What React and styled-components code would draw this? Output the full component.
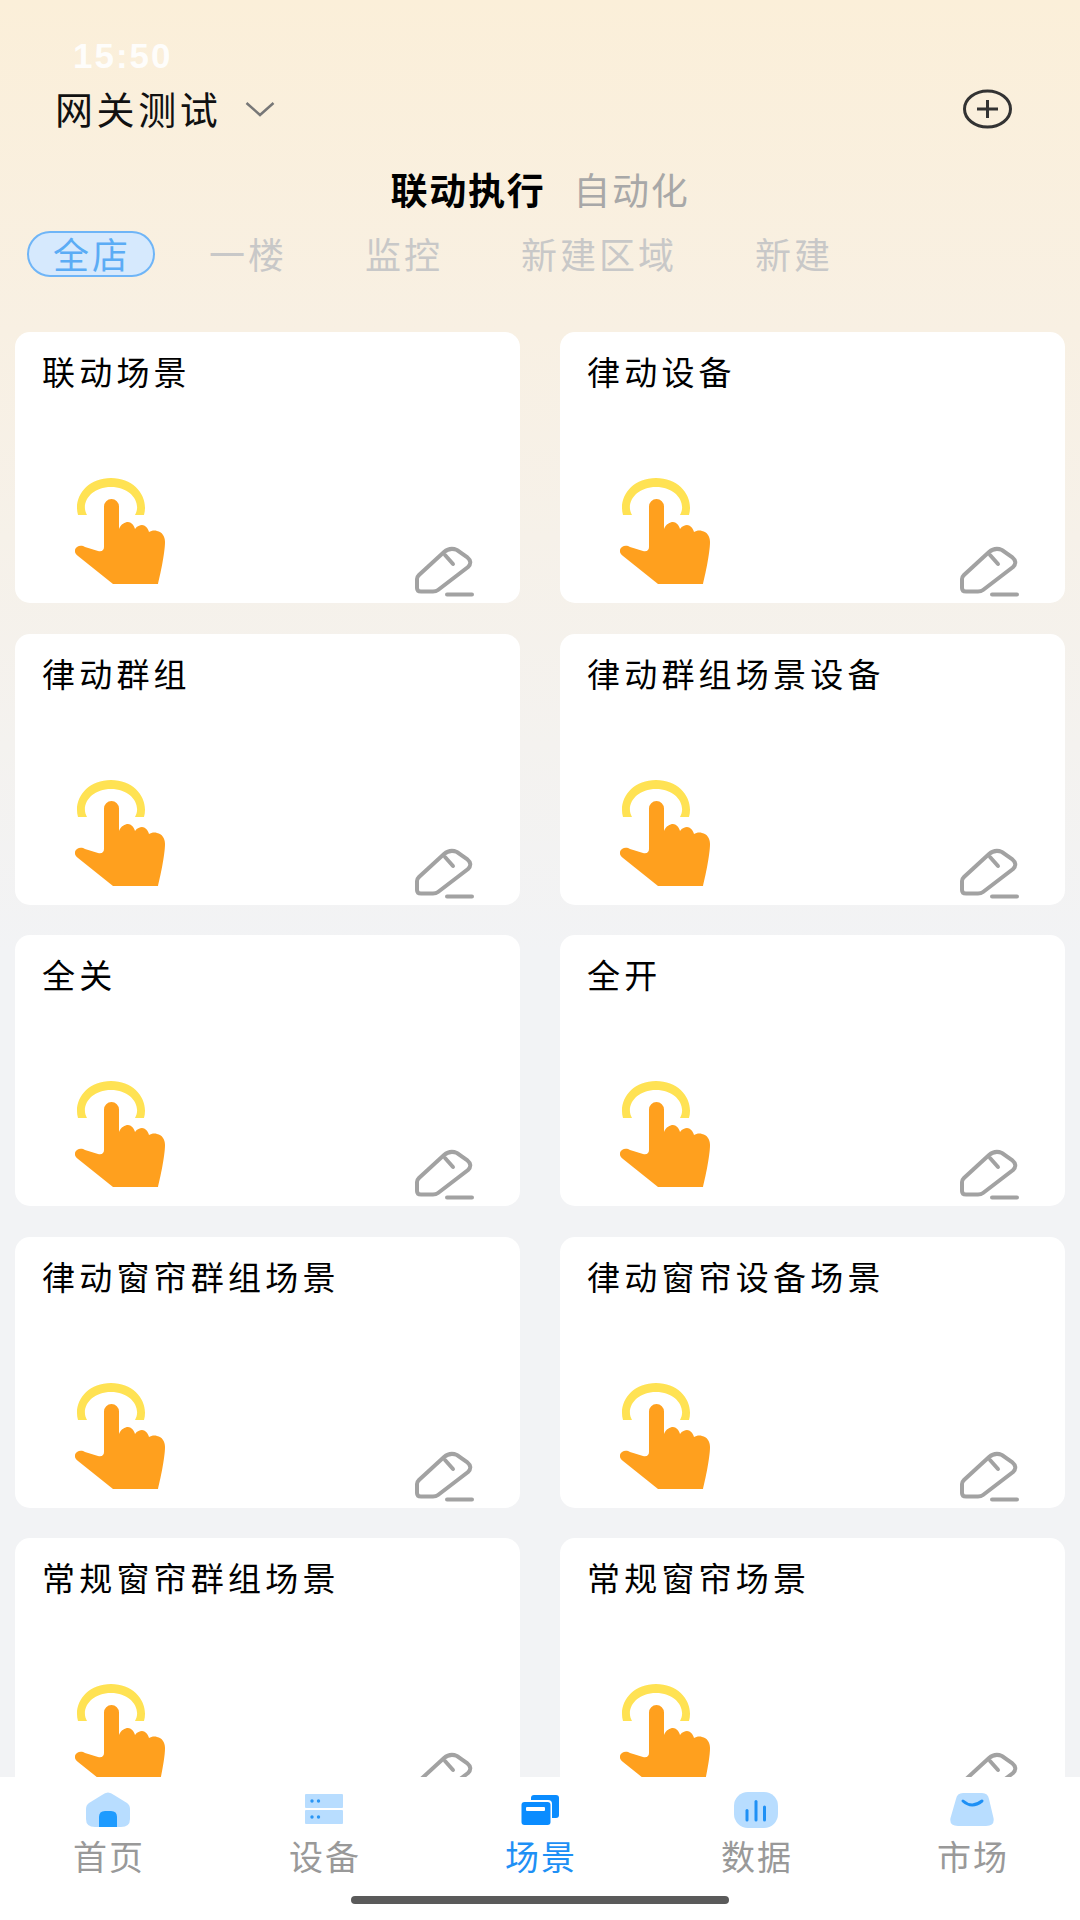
import styled, { createGlobalStyle } from "styled-components";

const GlobalStyle = createGlobalStyle`
  html, body {
    margin: 0;
    padding: 0;
  }
  * {
    box-sizing: border-box;
  }
`;

const FONT = `"Noto Sans CJK SC", "Noto Sans", sans-serif`;

const Page = styled.div`
  width: 1080px;
  height: 1920px;
  display: flex;
  flex-direction: column;
  overflow: hidden;
  font-family: ${FONT};
  background: linear-gradient(#fbefd9 0, #f8f0e3 330px, #f2f3f5 950px);
`;

// header start.
const StatusTime = styled.div`
  height: 36px;
  margin-top: 38px;
  padding-left: 73px;
  font-family: "Liberation Sans", sans-serif;
  font-size: 35px;
  font-weight: 700;
  line-height: 36px;
  letter-spacing: 2px;
  color: #fff;
  opacity: 0.9;
`;

const TopBar = styled.header`
  height: 70px;
  padding: 0 68px 0 55px;
  display: flex;
  align-items: center;
  justify-content: space-between;
`;

const Gateway = styled.div`
  display: flex;
  align-items: center;
  gap: 24px;
`;

const GatewayName = styled.span`
  font-size: 38px;
  line-height: 44px;
  letter-spacing: 3.6px;
  margin-top: -2px;
  color: #111;
`;

const ModeTabs = styled.nav`
  height: 56px;
  margin-top: 17px;
  display: flex;
  align-items: center;
  justify-content: center;
  gap: 28px;
`;

const ModeTab = styled.span`
  font-size: 37px;
  line-height: 44px;
  letter-spacing: 1.7px;
  font-weight: ${(props) => (props.$active ? 700 : 400)};
  color: ${(props) => (props.$active ? "#000" : "#a8a8a8")};
`;

const Filters = styled.div`
  height: 46px;
  margin-top: 14px;
  padding-left: 27px;
  display: flex;
  gap: 28px;
`;

const Filter = styled.span`
  height: 46px;
  padding: 0 22px 0 24px;
  border-radius: 23px;
  border: 2px solid ${(props) => (props.$active ? "#6fb5f7" : "transparent")};
  background: ${(props) => (props.$active ? "#d6e9fd" : "transparent")};
  font-size: 36px;
  line-height: 40px;
  letter-spacing: 3px;
  white-space: nowrap;
  color: ${(props) => (props.$active ? "#5bacf5" : "#c8c8c8")};
`;
// header end.

// cards start.
const Scroller = styled.main`
  flex: 1;
  min-height: 0;
  overflow: hidden;
  margin-top: 55px;
`;

const CardGrid = styled.div`
  padding: 0 15px;
  display: grid;
  grid-template-columns: 505px 505px;
  column-gap: 40px;
  row-gap: 30.5px;
`;

const Card = styled.article`
  height: 271px;
  padding: 17px 0 0 27px;
  display: flex;
  flex-direction: column;
  justify-content: space-between;
  background: #fff;
  border-radius: 15px;
`;

const CardTitle = styled.h3`
  margin: 0;
  font-size: 33px;
  font-weight: 400;
  line-height: 44px;
  letter-spacing: 4.2px;
  color: #000;
`;

const CardFoot = styled.div`
  display: flex;
  align-items: flex-end;
  justify-content: space-between;
  padding: 0 45px 5px 33px;
`;

const HandSvg = styled.svg`
  display: block;
  width: 92px;
  height: 108px;
  margin-bottom: 12px;
`;

const PenSvg = styled.svg`
  display: block;
  width: 60px;
  height: 52px;
`;
// cards end.

// tab bar start.
const TabBar = styled.footer`
  height: 143px;
  flex-shrink: 0;
  background: #fff;
  display: flex;
  flex-direction: column;
`;

const TabRow = styled.div`
  padding-top: 15px;
  display: grid;
  grid-template-columns: repeat(5, 216px);
`;

const TabItem = styled.div`
  display: flex;
  flex-direction: column;
  align-items: center;
`;

const TabIcon = styled.svg`
  display: block;
  width: 44px;
  height: 36px;
`;

const TabLabel = styled.span`
  margin-top: 6px;
  padding-left: 2px;
  font-size: 34px;
  line-height: 44px;
  letter-spacing: 2px;
  color: ${(props) => (props.$active ? "#1e90f5" : "#999")};
`;

const HomeIndicator = styled.div`
  width: 378px;
  height: 8px;
  margin: 18px auto 0;
  border-radius: 4px;
  background: #5a5a5a;
`;
// tab bar end.

const Chevron = () => (
  <svg width="30" height="16" viewBox="0 0 30 16" fill="none" stroke="#777" strokeWidth="2.5">
    <path d="M1.5 2 L15 14 L28.5 2" />
  </svg>
);

const AddButton = () => (
  <svg width="49" height="40" viewBox="0 0 49 40" fill="none" stroke="#333" strokeWidth="3">
    <ellipse cx="24.5" cy="20" rx="23" ry="18" />
    <path d="M14 20 H35 M24.5 11 V29" />
  </svg>
);

const Hand = () => (
  <HandSvg viewBox="25 17 92 108">
    <path
      fill="#ffe253"
      d="M37 54 C30 42 41 26 61 26 C81 26 92 42 85 54 H94 C99 36 85 17 61 17 C37 17 23 36 28 54 Z"
    />
    <path
      fill="#ffa01e"
      d="M54 45.5 A7.5 7.5 0 0 1 69 45.5 V68 C71 63 75 61 78 61 C81 61 84 64 85 68 C87 65 90 64 92 64 C95 64 98 67 99 71 C101 70 104 69 107 70 C112 71 115 75 115 81 C115 92 110 115 108 123 H63 L28 95 C24 92 24 88 27 86 C30 84 33 85 35 86 L48 90 C52 91 54 89 54 86 Z"
    />
  </HandSvg>
);

const Pen = () => (
  <PenSvg viewBox="15 15 60 52" fill="none" stroke="#a2a2a2" strokeWidth="4" strokeLinecap="round">
    <path d="M17 48 Q17 46 19 44 L44 21 Q50 16 57 19 L67 26 Q73 31 68 36 L38 59 Q36 60.5 33 60.5 H21 Q17 60.5 17 57 Z" />
    <path d="M45 24 L53 33" />
    <path d="M47 63.5 H72" />
  </PenSvg>
);

const HomeIcon = () => (
  <TabIcon viewBox="0 0 44 36">
    <path
      fill="#b8ddff"
      d="M16 3 Q22 -2 28 3 L41 11 Q44 13 44 17 V27 Q44 35 35 35 H9 Q0 35 0 27 V17 Q0 13 3 11 Z"
    />
    <path fill="#1e9bff" d="M13 35 V25 Q13 19 19 19 H25 Q31 19 31 25 V35 Z" />
  </TabIcon>
);

const DeviceIcon = () => (
  <TabIcon viewBox="0 0 44 36">
    <rect x="3" y="2" width="38" height="14" rx="1" fill="#b8ddff" />
    <rect x="3" y="18" width="38" height="14" rx="1" fill="#b8ddff" />
    <g fill="#2a96f5">
      <circle cx="10" cy="9" r="1.7" />
      <circle cx="16.5" cy="9" r="1.7" />
      <circle cx="10" cy="25" r="1.7" />
      <circle cx="16.5" cy="25" r="1.7" />
    </g>
  </TabIcon>
);

const SceneIcon = () => (
  <TabIcon viewBox="0 0 44 36">
    <rect x="13" y="3" width="28" height="23" rx="3" fill="#0a8cff" />
    <rect x="2" y="8" width="32" height="27" rx="4" fill="#fff" />
    <rect x="3.5" y="10" width="29" height="23" rx="3" fill="#0a8cff" />
    <rect x="8" y="15" width="19" height="4" rx="1" fill="#fff" />
  </TabIcon>
);

const DataIcon = () => (
  <TabIcon viewBox="0 0 44 36">
    <rect x="0" y="0" width="44" height="36" rx="14" fill="#b8ddff" />
    <g stroke="#1e90f5" strokeWidth="3" strokeLinecap="round">
      <path d="M13 18.5 V28" />
      <path d="M22 9.5 V28" />
      <path d="M30.5 15 V28" />
    </g>
  </TabIcon>
);

const MarketIcon = () => (
  <TabIcon viewBox="0 0 44 36">
    <path
      fill="#b8ddff"
      d="M13 1 H32 Q38 1 39 7 L43.5 26 Q45 34 36 34 H8 Q-1 34 0.5 26 L6 7 Q7 1 13 1 Z"
    />
    <path d="M13 9 Q22 17 32 9" fill="none" stroke="#1e90f5" strokeWidth="3" strokeLinecap="round" />
  </TabIcon>
);

const FILTERS = ["全店", "一楼", "监控", "新建区域", "新建"];

const SCENES = [
  "联动场景",
  "律动设备",
  "律动群组",
  "律动群组场景设备",
  "全关",
  "全开",
  "律动窗帘群组场景",
  "律动窗帘设备场景",
  "常规窗帘群组场景",
  "常规窗帘场景",
];

const TABS = [
  { label: "首页", Icon: HomeIcon },
  { label: "设备", Icon: DeviceIcon },
  { label: "场景", Icon: SceneIcon, active: true },
  { label: "数据", Icon: DataIcon },
  { label: "市场", Icon: MarketIcon },
];

const App = () => {
  return (
    <Page>
      <GlobalStyle />
      <StatusTime>15:50</StatusTime>

      {/* gateway */}
      <TopBar>
        <Gateway>
          <GatewayName>网关测试</GatewayName>
          <Chevron />
        </Gateway>
        <AddButton />
      </TopBar>

      {/* mode */}
      <ModeTabs>
        <ModeTab $active>联动执行</ModeTab>
        <ModeTab>自动化</ModeTab>
      </ModeTabs>

      {/* areas */}
      <Filters>
        {FILTERS.map((name, i) => (
          <Filter key={name} $active={i === 0}>
            {name}
          </Filter>
        ))}
      </Filters>

      {/* scenes */}
      <Scroller>
        <CardGrid>
          {SCENES.map((name) => (
            <Card key={name}>
              <CardTitle>{name}</CardTitle>
              <CardFoot>
                <Hand />
                <Pen />
              </CardFoot>
            </Card>
          ))}
        </CardGrid>
      </Scroller>

      {/* tabs */}
      <TabBar>
        <TabRow>
          {TABS.map(({ label, Icon, active }) => (
            <TabItem key={label}>
              <Icon />
              <TabLabel $active={active}>{label}</TabLabel>
            </TabItem>
          ))}
        </TabRow>
        <HomeIndicator />
      </TabBar>
    </Page>
  );
};

export default App;
